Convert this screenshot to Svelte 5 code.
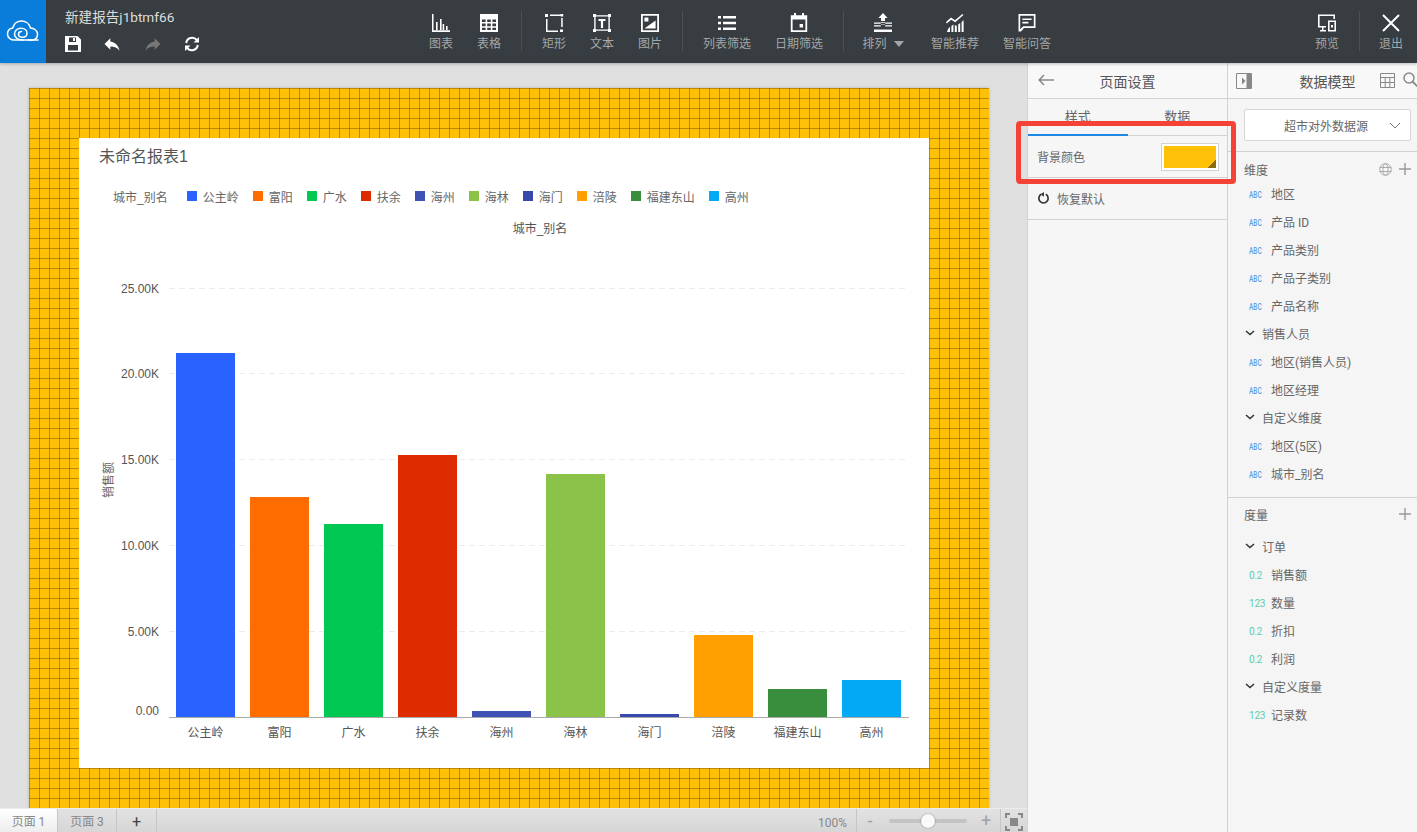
<script>
  const tools = [
    { label: '图表', d: 'M1 1h1.5v16.2H19V19H1zM5 9h1.6v8H5zM9 6h1.6v11H9zM11.6 11h1.6v6h-1.6zM15 13h1.6v4H15z' },
    { label: '表格', d: 'M1 1h18v18H1zM3 6.5V9h3.6V6.5zM8.2 6.5V9h3.6V6.5zM13.4 6.5V9H17V6.5zM3 10.6v2.6h3.6v-2.6zM8.2 10.6v2.6h3.6v-2.6zM13.4 10.6v2.6H17v-2.6zM3 14.8V17h3.6v-2.2zM8.2 14.8V17h3.6v-2.2zM13.4 14.8V17H17v-2.2z', evenodd: true, sep: true },
    { label: '矩形', d: 'M1 1h3v3H1zM6 1.6h12V3H6zM16.6 1h2.6v2.6h-2.6zM2 6h1.5v11.6H14V19H2zM16 16.4h3V19h-3zM17.2 5h1.5v9h-1.5z' },
    { label: '文本', d: 'M1 1h3v1.2h12V1h3v3h-1.2v12H19v3h-3v-1.2H4V19H1v-3h1.2V4H1zM3.6 4v12H4v.4h12V16h.4V4H16v-.4H4V4zM6.5 6h7v2h-2.4v7H8.9V8H6.5z', evenodd: true },
    { label: '图片', d: 'M1 1h18v18H1zM2.8 2.8v14.4h14.4V2.8zM4.4 4.4h4v4h-4zM4.4 15.6 15.6 7.6v8z', evenodd: true, sep: true },
    { label: '列表筛选', w: 72, d: 'M1 3h3v2.6H1zM6 3h13v2.6H6zM1 8.7h3v2.6H1zM6 8.7h13v2.6H6zM1 14.4h3V17H1zM6 14.4h13V17H6z' },
    { label: '日期筛选', w: 72, d: 'M5 0h2v2.2h6V0h2v2.2h3.2V19H1.8V2.2H5zM3.6 6.6v10.6h12.8V6.6zM10.6 11h3.4v3.6h-3.4z', evenodd: true, sep: true },
    { label: '排列', caret: true, w: 62, gap: 5, d: 'M10 0l4.6 5H12v3h-4V5H5.400zM1 9.400h6.800v1.400H1zM12.200 9.400H19v1.400h-6.800zM8 11h4v.6H8zM1 12.200h6.800v1.400H1zM12.200 12.200H19v1.400h-6.800zM8 9h4v.8H8zM1 16.600h18V19H1z' },
    { label: '智能推荐', w: 72, d: 'M1 9l5-4.400 4 2.600L17.400 1l1 1.100-8.200 7.200-4-2.600-4.400 3.800zM2 19c.5-2.500 1.500-4 3-5v5zM6.400 13l2-1.400V19h-2zM9.800 12l2 1V19h-2zM13.200 11.600l2-1.600V19h-2zM16.600 9l2-1.800V19h-2z' },
    { label: '智能问答', w: 72, d: 'M1.500 1h17v14H7l-3 3.600H1.500zM3.200 2.700v13.600L6.200 13.300h10.600V2.700zM5.400 5.400h9.200V7H5.400zM5.400 8.800h6v1.600h-6z', evenodd: true }
  ]

  const series = [
    { name: '公主岭', color: '#2962ff', top: 353 },
    { name: '富阳', color: '#ff6d00', top: 497 },
    { name: '广水', color: '#00c853', top: 524 },
    { name: '扶余', color: '#dd2c00', top: 455 },
    { name: '海州', color: '#3f51b5', top: 711 },
    { name: '海林', color: '#8bc34a', top: 474 },
    { name: '海门', color: '#3949ab', top: 714 },
    { name: '涪陵', color: '#ff9f00', top: 635 },
    { name: '福建东山', color: '#388e3c', top: 689 },
    { name: '高州', color: '#03a9f4', top: 680 }
  ]

  const ticks = [
    { label: '25.00K', y: 288.5 },
    { label: '20.00K', y: 373.5 },
    { label: '15.00K', y: 459.5 },
    { label: '10.00K', y: 545.5 },
    { label: '5.00K', y: 631.5 }
  ]

  const dims = [
    { name: '地区' }, { name: '产品 ID' }, { name: '产品类别' }, { name: '产品子类别' }, { name: '产品名称' },
    { name: '销售人员', group: true },
    { name: '地区(销售人员)' }, { name: '地区经理' },
    { name: '自定义维度', group: true },
    { name: '地区(5区)' }, { name: '城市_别名' }
  ]

  const measures = [
    { name: '订单', group: true },
    { name: '销售额', tag: '0.2' }, { name: '数量', tag: '123' }, { name: '折扣', tag: '0.2' }, { name: '利润', tag: '0.2' },
    { name: '自定义度量', group: true },
    { name: '记录数', tag: '123' }
  ]
</script>

{#snippet field(f)}
  {#if f.group}
    <div class="field group">
      <svg class="chev" viewBox="0 0 10 6" width="10" height="6"><path d="M1 1l4 3.600L9 1" fill="none" stroke="#333" stroke-width="1.500" /></svg>
      <span>{f.name}</span>
    </div>
  {:else}
    <div class="field">
      {#if f.tag}
        <span class="tag num">{f.tag}</span>
      {:else}
        <span class="tag abc"><b>ABC</b></span>
      {/if}
      <span>{f.name}</span>
    </div>
  {/if}
{/snippet}

<div class="app">
  <header class="topbar">
    <div class="logo">
      <svg viewBox="0 0 34 24" width="34" height="24" fill="none" stroke="#fff" stroke-width="1.500" stroke-linecap="round">
        <path d="M26 21H8.500C4.500 21 1.500 18.500 1.500 15c0-3 2.200-5.500 5.200-6C8 4.500 11.500 2 15.500 2c4.500 0 8 3 9 7 3.500 0 7 2.500 7 6.200 0 3-2 5.300-5 5.800" />
        <path d="M22 21h10M17 21c-5 0-8.500-2.500-8.500-6s3-5.800 6.500-5.800 6 2 6 5c0 2.500-2 4-4.500 4s-4-1.300-4-3 1.300-2.600 3-2.600" />
      </svg>
    </div>
    <div class="doc">
      <div class="doc-title">新建报告j1btmf66</div>
      <div class="doc-actions">
        <svg viewBox="0 0 16 16" width="16" height="16"><path fill="#fff" fill-rule="evenodd" d="M0 0h12.500L16 3.500V16H0zM4 1.500V6h7V1.500zM8 2h2v3H8zM3 9v5.500h10V9z" /></svg>
        <svg viewBox="0 0 24 24" width="20" height="20"><path fill="#fff" d="M10 9V5l-7 7 7 7v-4.100c5 0 8.500 1.600 11 5.100-1-5-4-10-11-11z" /></svg>
        <svg viewBox="0 0 24 24" width="20" height="20"><path fill="#777" d="M14 9V5l7 7-7 7v-4.100c-5 0-8.500 1.600-11 5.100 1-5 4-10 11-11z" /></svg>
        <svg viewBox="0 0 16 16" width="16" height="16" fill="none" stroke="#fff" stroke-width="2"><path d="M2.200 7A6 6 0 0 1 12.800 4M13.800 9A6 6 0 0 1 3.200 12" /><path fill="#fff" stroke="none" d="M15 1v5.500H9.500zM1 15V9.500h5.500z" /></svg>
      </div>
    </div>

    <nav class="tools">
      {#each tools as t}
        <div class="tool" style:width="{t.w ?? 48}px" style:margin-right="{t.gap ?? 0}px">
          <svg viewBox="0 0 20 20" width="20" height="20"><path fill="#fff" fill-rule={t.evenodd ? 'evenodd' : 'nonzero'} d={t.d} /></svg>
          <span>{t.label}{#if t.caret}<i class="caret"></i>{/if}</span>
        </div>
        {#if t.sep}<div class="sep"></div>{/if}
      {/each}
    </nav>

    <div class="exit-group">
      <div class="tool preview">
        <svg viewBox="0 0 20 20" width="20" height="20"><path fill="#fff" fill-rule="evenodd" d="M1 1.500h17V6h-1.600V3.100H2.600v9.800H9v1.600H6.500V17H9v1.400H3V17h2v-2.500H1zM11 7.500h8v11h-8zM12.600 9v8h4.800V9zM14 12h2v2.500h-2z" /></svg>
        <span>预览</span>
      </div>
      <div class="sep"></div>
      <div class="tool quit">
        <svg viewBox="0 0 20 20" width="20" height="20"><path fill="none" stroke="#fff" stroke-width="2" d="M2 2l16 16M18 2L2 18" /></svg>
        <span>退出</span>
      </div>
    </div>
  </header>

  <div class="body">
    <main class="workspace">
      <div class="canvas">
        <section class="page">
          <article class="report">
            <h1>未命名报表1</h1>
            <div class="legend">
              <span class="legend-title">城市_别名</span>
              {#each series as s}
                <span class="legend-item"><i style:background={s.color}></i>{s.name}</span>
              {/each}
            </div>
            <svg class="plot" viewBox="79 218 850 550" width="850" height="550">
              <text x="540" y="233" text-anchor="middle" class="axis-title">城市_别名</text>
              <text transform="translate(113 480) rotate(-90)" text-anchor="middle" class="y-title">销售额</text>
              {#each ticks as t}
                <line x1="169" x2="909" y1={t.y} y2={t.y} stroke="#ececec" stroke-dasharray="6 4" />
                <text x="159" y={t.y + 4} text-anchor="end" class="tick">{t.label}</text>
              {/each}
              <text x="159" y="715" text-anchor="end" class="tick">0.00</text>
              {#each series as s, i}
                <rect x={176 + i * 74} y={s.top} width="59" height={717 - s.top} fill={s.color} />
                <text x={205.500 + i * 74} y="737" text-anchor="middle" class="tick">{s.name}</text>
              {/each}
              <line x1="169" x2="909" y1="717.500" y2="717.500" stroke="#aaa" />
            </svg>
          </article>
        </section>
      </div>

      <footer class="pagebar">
        <div class="tab active">页面 1</div>
        <div class="tab">页面 3</div>
        <div class="tab add">+</div>
        <div class="zoom-pct">100%</div>
        <div class="zoom-ctl">
          <span class="zoom-btn">-</span>
          <div class="slider"><i></i></div>
          <span class="zoom-btn">+</span>
        </div>
        <div class="fit">
          <svg viewBox="0 0 18 18" width="18" height="18" fill="none" stroke="#888" stroke-width="2"><path d="M1 5V1h4M13 1h4v4M17 13v4h-4M5 17H1v-4" /><rect x="5" y="5" width="8" height="8" fill="#888" stroke="none" /></svg>
        </div>
      </footer>
    </main>

    <aside class="panel settings">
      <div class="panel-head">
        <svg class="back" viewBox="0 0 16 12" width="16" height="12"><path d="M6 1L1.200 6 6 11M1.500 6H16" fill="none" stroke="#888" stroke-width="1.500" /></svg>
        <span>页面设置</span>
      </div>
      <div class="tabs">
        <div class="ptab on">样式</div>
        <div class="ptab">数据</div>
      </div>
      <div class="row bg-row">
        <span>背景颜色</span>
        <div class="swatch"><div class="swatch-fill"></div></div>
      </div>
      <div class="row reset">
        <svg viewBox="0 0 14 14" width="13" height="13"><path d="M4.500 2.500A5 5 0 1 0 9.500 2.500" fill="none" stroke="#333" stroke-width="1.800" /><path d="M7.500 0v5L3.800 2.400z" fill="#333" /></svg>
        <span>恢复默认</span>
      </div>
      <div class="highlight"></div>
    </aside>

    <aside class="panel model">
      <div class="panel-head">
        <svg class="collapse" viewBox="0 0 16 16" width="16" height="16"><path fill="none" stroke="#888" d="M.500.500h15v15H.500z" /><path fill="#888" d="M10.500 1h4.500v14h-4.500zM6 4.500L9.500 8 6 11.500z" /></svg>
        <span>数据模型</span>
        <svg class="grid-btn" viewBox="0 0 15 15" width="15" height="15"><path fill="none" stroke="#888" d="M.500.500h14v14H.500zM.500 4.500h14M.500 9.500h14M5.200 4.500v10M9.800 4.500v10" /></svg>
        <svg class="search" viewBox="0 0 15 15" width="15" height="15"><circle cx="6" cy="6" r="5" fill="none" stroke="#888" stroke-width="1.500" /><path d="M9.500 9.500l5 5" stroke="#888" stroke-width="1.800" /></svg>
      </div>
      <div class="source">
        <div class="select">
          <span>超市对外数据源</span>
          <svg viewBox="0 0 12 7" width="12" height="7"><path d="M1 1l5 5 5-5" fill="none" stroke="#777" /></svg>
        </div>
      </div>
      <div class="fields dims">
        <div class="sec-head">
          <span>维度</span>
          <svg class="globe" viewBox="0 0 13 13" width="13" height="13" fill="none" stroke="#aaa"><circle cx="6.500" cy="6.500" r="5.800" /><ellipse cx="6.500" cy="6.500" rx="2.600" ry="5.800" /><path d="M.700 4.500h11.600M.700 8.500h11.600" /></svg>
          <svg class="plus" viewBox="0 0 12 12" width="12" height="12"><path d="M6 0v12M0 6h12" stroke="#999" stroke-width="1.400" /></svg>
        </div>
        {#each dims as f}
          {@render field(f)}
        {/each}
      </div>
      <div class="fields measures">
        <div class="sec-head wide">
          <span>度量</span>
          <svg class="plus" viewBox="0 0 12 12" width="12" height="12"><path d="M6 0v12M0 6h12" stroke="#999" stroke-width="1.400" /></svg>
        </div>
        {#each measures as f}
          {@render field(f)}
        {/each}
      </div>
    </aside>
  </div>
</div>

<style>
  :global(body) {
    margin: 0;
    overflow: hidden;
    font-family: Roboto, "Noto Sans CJK SC", sans-serif;
  }
  .app {
    width: 1417px;
    height: 832px;
    display: flex;
    flex-direction: column;
    overflow: hidden;
    color: #666;
  }

  /* top bar */
  .topbar {
    height: 63px;
    flex: none;
    display: flex;
    background: #373d40;
    position: relative;
    z-index: 2;
    box-shadow: 0 1px 3px rgba(0,0,0,0.25);
  }
  .logo {
    width: 46px;
    background: #0a7ddb;
    display: flex;
    align-items: center;
    justify-content: center;
    padding-bottom: 2px;
    box-sizing: border-box;
  }
  .doc {
    width: 352px;
    padding: 8px 0 0 19px;
    flex: none;
  }
  .doc-title {
    font-size: 13.600px;
    line-height: 18px;
    color: #ddd;
  }
  .doc-actions {
    display: flex;
    align-items: center;
    gap: 21px;
    margin-top: 8px;
    height: 20px;
  }
  .tools {
    display: flex;
  }
  .tool {
    display: flex;
    flex-direction: column;
    align-items: center;
    padding-top: 13px;
    box-sizing: border-box;
    flex: none;
    font-size: 12px;
    line-height: 22px;
    color: #a3a7a9;
    white-space: nowrap;
  }
  .caret {
    display: inline-block;
    border: 5px solid transparent;
    border-top: 6px solid #a3a7a9;
    border-bottom: 0;
    margin-left: 7px;
    vertical-align: 1px;
  }
  .sep {
    width: 1px;
    height: 40px;
    margin: 11px 8px 0;
    background: #4a5054;
    flex: none;
  }
  .exit-group {
    margin-left: auto;
    display: flex;
  }
  .exit-group .sep {
    margin: 11px 0 0;
  }
  .preview { width: 64px; }
  .quit { width: 57px; padding-left: 5px; }

  /* main area */
  .body {
    flex: 1;
    min-height: 0;
    display: flex;
  }
  .workspace {
    width: 1027px;
    flex: none;
    display: flex;
    flex-direction: column;
    background: #e0e0e0;
  }
  .canvas {
    flex: 1;
    min-height: 0;
    overflow: hidden;
    padding: 25px 0 0 29px;
  }
  .page {
    width: 960px;
    height: 720px;
    box-sizing: border-box;
    padding: 50px 60px 40px 50px;
    background-color: #ffc107;
    background-image:
      linear-gradient(to right, rgba(120,85,0,0.5) 1px, transparent 1px),
      linear-gradient(to bottom, rgba(120,85,0,0.5) 1px, transparent 1px);
    background-size: 10px 10px;
    box-shadow: 0 0 3px rgba(0,0,0,0.2);
  }
  .report {
    background: #fff;
    height: 630px;
  }
  .report h1 {
    margin: 0;
    height: 38px;
    padding-left: 20px;
    font-family: "Liberation Sans", "Noto Sans CJK SC", sans-serif;
    font-size: 16px;
    font-weight: 400;
    line-height: 37px;
    color: #555;
  }
  .legend {
    height: 40px;
    margin-bottom: 2px;
    padding-left: 34px;
    display: flex;
    align-items: center;
    font-family: "Liberation Sans", "Noto Sans CJK SC", sans-serif;
    font-size: 12px;
    color: #666;
  }
  .legend-title {
    margin-right: 19px;
  }
  .legend-item {
    display: flex;
    align-items: center;
    margin-right: 14px;
  }
  .legend-item i {
    width: 10px;
    height: 10px;
    margin-right: 6px;
  }
  .plot {
    display: block;
    font-family: "Liberation Sans", "Noto Sans CJK SC", sans-serif;
  }
  .tick, .axis-title {
    font-size: 12px;
    fill: #555;
  }
  .y-title {
    font-size: 12px;
    fill: #666;
  }

  /* page tabs */
  .pagebar {
    height: 24px;
    flex: none;
    display: flex;
    background: linear-gradient(#e2e2e2, #d6d6d6);
    border-top: 1px solid #ececec;
    box-sizing: border-box;
    font-size: 12px;
    color: #888;
  }
  .tab {
    width: 59px;
    flex: none;
    text-align: center;
    line-height: 26px;
    border-right: 1px solid #c6c6c6;
    box-sizing: border-box;
  }
  .tab.active {
    width: 58px;
    background: linear-gradient(#fff, #eee);
  }
  .tab.add {
    width: 40px;
    font-size: 16px;
    color: #444;
  }
  .zoom-pct {
    margin-left: auto;
    width: 47px;
    line-height: 28px;
    padding-right: 9px;
    border-right: 1px solid #c6c6c6;
    text-align: right;
    flex: none;
  }
  .zoom-ctl {
    width: 144px;
    flex: none;
    display: flex;
    align-items: center;
    justify-content: space-between;
    padding: 0 8px 0 7px;
    box-sizing: border-box;
    font-size: 18px;
    color: #a0a0a0;
    border-right: 1px solid #c6c6c6;
  }
  .zoom-btn {
    width: 12px;
    text-align: center;
  }
  .slider {
    width: 78px;
    height: 4px;
    background: #c4c4c4;
    border-radius: 2px;
    position: relative;
    margin-top: 1px;
  }
  .slider i {
    position: absolute;
    left: 32px;
    top: -5px;
    width: 14px;
    height: 14px;
    border-radius: 50%;
    background: #fafafa;
    box-shadow: 0 0 2px rgba(0,0,0,0.4);
  }
  .fit {
    width: 26px;
    flex: none;
    display: flex;
    align-items: center;
    justify-content: center;
    padding-top: 2px;
    box-sizing: border-box;
  }

  /* side panels */
  .panel {
    background: #f5f5f5;
    box-sizing: border-box;
    font-size: 12px;
    position: relative;
  }
  .settings {
    width: 201px;
    flex: none;
    border-left: 1px solid #d2d2d2;
    border-right: 1px solid #d2d2d2;
    background: #f6f6f6;
    z-index: 1;
  }
  .model {
    flex: 1;
    min-width: 0;
    overflow: hidden;
  }
  .panel-head {
    height: 36px;
    display: flex;
    align-items: center;
    justify-content: center;
    position: relative;
    background: #f8f8f8;
    border-bottom: 1px solid #d2d2d2;
    font-size: 14px;
    color: #555;
    box-sizing: border-box;
  }
  .back { position: absolute; left: 10px; top: 11px; }
  .collapse { position: absolute; left: 8px; top: 10px; }
  .model .panel-head span { padding-left: 10px; padding-top: 1px; }
  .grid-btn { position: absolute; left: 152px; top: 10px; }
  .search { position: absolute; left: 175px; top: 9px; }
  .tabs {
    display: flex;
    height: 37px;
    border-bottom: 1px solid #d2d2d2;
    box-sizing: border-box;
  }
  .ptab {
    width: 100px;
    text-align: center;
    font-size: 13px;
    line-height: 36px;
    color: #666;
    margin-bottom: -1px;
    box-sizing: border-box;
  }
  .ptab.on {
    border-bottom: 2px solid #1e88e5;
  }
  .row {
    display: flex;
    align-items: center;
    padding: 0 8px 0 9px;
    box-sizing: border-box;
    height: 42px;
    border-bottom: 1px solid #d2d2d2;
  }
  .bg-row {
    justify-content: space-between;
  }
  .reset {
    gap: 7px;
    padding-left: 9px;
  }
  .swatch {
    width: 58px;
    height: 28px;
    padding: 2px;
    box-sizing: border-box;
    background: #fff;
    border: 1px solid #d2d2d2;
  }
  .swatch-fill {
    height: 100%;
    background: linear-gradient(135deg, #ffc107 calc(100% - 6px), #8a6d10 calc(100% - 6px));
  }
  .highlight {
    position: absolute;
    left: -12px;
    top: 58px;
    width: 220px;
    height: 63px;
    box-sizing: border-box;
    border: 5px solid #f44336;
    border-radius: 4px;
  }
  .source {
    height: 53px;
    padding: 10px 6px 0 16px;
    box-sizing: border-box;
    border-bottom: 1px solid #d2d2d2;
  }
  .select {
    height: 32px;
    display: flex;
    align-items: center;
    justify-content: space-between;
    padding: 0 9px 0 39px;
    background: #fff;
    border: 1px solid #d6d6d6;
    border-radius: 2px;
    box-sizing: border-box;
  }
  .fields {
    padding-left: 16px;
  }
  .dims {
    height: 346px;
    box-sizing: border-box;
    padding-top: 7px;
    border-bottom: 1px solid #d2d2d2;
  }
  .sec-head {
    height: 20px;
    display: flex;
    align-items: center;
    gap: 7px;
    padding-right: 6px;
  }
  .sec-head span {
    margin-right: auto;
  }
  .sec-head.wide {
    height: 32px;
    margin-bottom: 2px;
  }
  .field {
    height: 28px;
    display: flex;
    align-items: center;
  }
  .field .tag {
    width: 27px;
    flex: none;
    padding: 3px 0 0 5px;
    box-sizing: border-box;
  }
  .tag.abc {
    color: #5e9de6;
    font-size: 9px;
    line-height: 12px;
  }
  .tag.abc b {
    display: inline-block;
    font-weight: 500;
    transform: scaleX(0.72);
    transform-origin: left center;
  }
  .tag.num {
    color: #57cfb0;
    font-size: 10px;
    letter-spacing: -0.2px;
    padding-top: 2px;
  }
  .field.group {
    padding-left: 1px;
  }
  .chev {
    margin-right: 7px;
  }
</style>
